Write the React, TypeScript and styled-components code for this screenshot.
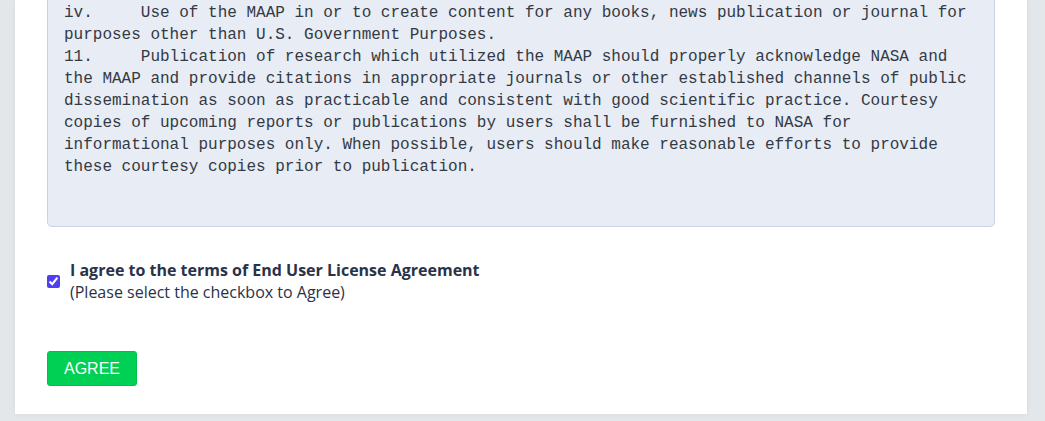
import React, { useState } from "react";
import styled, { createGlobalStyle } from "styled-components";

const GlobalStyle = createGlobalStyle`
  html, body {
    margin: 0;
    padding: 0;
    background: #e4e7e9;
  }
  body {
    font-family: "Open Sans", "Noto Sans", sans-serif;
  }
`;

const Page = styled.div`
  padding: 0 18px 7px 15px;
  height: 421px;
  box-sizing: border-box;
  overflow: hidden;
`;

const Card = styled.div`
  background: #ffffff;
  padding: 0 32px 28px 32px;
  box-shadow: 0 0 6px rgba(0, 0, 0, 0.06);
`;

const TermsBox = styled.div`
  background: #e8ecf4;
  border: 1px solid #c9d2e6;
  border-top: none;
  border-radius: 0 0 5px 5px;
  padding: 2px 16px 48px 16px;
  font-family: "Liberation Mono", "Courier New", monospace;
  font-size: 16px;
  line-height: 22px;
  color: #333a44;
  white-space: pre-wrap;
  tab-size: 8;
`;

const AgreeRow = styled.label`
  display: flex;
  align-items: center;
  gap: 10px;
  margin-top: 32px;
  cursor: pointer;
`;

const Check = styled.input`
  width: 13px;
  height: 13px;
  margin: 0;
  accent-color: #4f3ff0;
`;

const LabelText = styled.div`
  display: flex;
  flex-direction: column;
  font-size: 16px;
  line-height: 22px;
  color: #2a3249;
`;

const Strong = styled.span`
  font-weight: 700;
`;

const AgreeButton = styled.button`
  margin-top: 48px;
  width: 90px;
  height: 35px;
  background: #00d053;
  border: 1px solid #00bf4c;
  border-radius: 3px;
  color: #ffffff;
  font-family: "Liberation Sans", Arial, sans-serif;
  font-size: 16px;
  padding: 0;
  cursor: pointer;
`;

const lines = [
  "iv.\tUse of the MAAP in or to create content for any books, news publication or journal for",
  "purposes other than U.S. Government Purposes.",
  "11.\tPublication of research which utilized the MAAP should properly acknowledge NASA and",
  "the MAAP and provide citations in appropriate journals or other established channels of public",
  "dissemination as soon as practicable and consistent with good scientific practice. Courtesy",
  "copies of upcoming reports or publications by users shall be furnished to NASA for",
  "informational purposes only. When possible, users should make reasonable efforts to provide",
  "these courtesy copies prior to publication.",
];

export default function App() {
  const [agreed, setAgreed] = useState(true);
  return (
    <>
      <GlobalStyle />
      <Page>
        <Card>
          <TermsBox>{lines.join("\n")}</TermsBox>
          <AgreeRow>
            <Check
              type="checkbox"
              checked={agreed}
              onChange={(e) => setAgreed(e.target.checked)}
            />
            <LabelText>
              <Strong>I agree to the terms of End User License Agreement</Strong>
              <span>(Please select the checkbox to Agree)</span>
            </LabelText>
          </AgreeRow>
          <AgreeButton>AGREE</AgreeButton>
        </Card>
      </Page>
    </>
  );
}
